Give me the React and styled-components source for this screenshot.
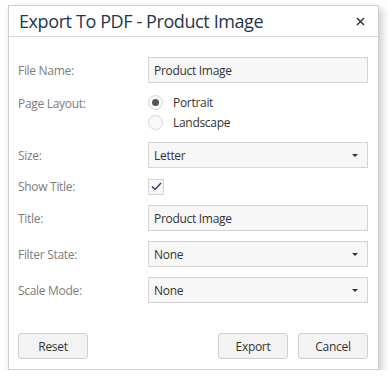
import styled, { createGlobalStyle } from "styled-components";

const Global = createGlobalStyle`
  body {
    margin: 0;
    background: #ffffff;
    font-family: "Open Sans", "Liberation Sans", sans-serif;
  }
`;

const Page = styled.div`
  padding: 5px 0 0 8px;
`;

const Dialog = styled.div`
  width: 369px;
  border: 1px solid #cfcfcf;
  background: #fff;
  box-shadow: 3px 4px 8px rgba(0, 0, 0, 0.22);
`;

const Header = styled.div`
  height: 30px;
  display: flex;
  align-items: center;
  justify-content: space-between;
  padding: 0 13px 0 10px;
  border-bottom: 1px solid #d6d6d6;
`;

const Title = styled.div`
  font-size: 18px;
  font-weight: 400;
  color: #22364d;
  letter-spacing: -0.4px;
`;

const Close = styled.button`
  border: 0;
  background: none;
  padding: 0;
  width: 10px;
  height: 10px;
  display: flex;
  align-items: center;
  justify-content: center;
  cursor: pointer;
`;

const Body = styled.div`
  padding: 20px 10px 10px 9px;
`;

const Row = styled.div`
  display: grid;
  grid-template-columns: 130px 1fr;
  align-items: center;
  margin-bottom: ${(p) => p.$gap ?? 10}px;
`;

const Label = styled.div`
  font-size: 12px;
  letter-spacing: -0.3px;
  color: #7d7d7d;
  align-self: ${(p) => (p.$top ? "start" : "center")};
  padding-top: ${(p) => (p.$top ? 2 : 0)}px;
`;

const Field = styled.div`
  height: 24px;
  border: 1px solid #d4d4d4;
  background: #f7f7f7;
  display: flex;
  align-items: center;
  justify-content: space-between;
  padding: 0 9px 0 5px;
  font-size: 12px;
  letter-spacing: -0.3px;
  color: #333;
`;

const Caret = styled.span`
  width: 0;
  height: 0;
  border-left: 3px solid transparent;
  border-right: 3px solid transparent;
  border-top: 3px solid #333;
`;

const RadioGroup = styled.div`
  display: flex;
  flex-direction: column;
`;

const RadioItem = styled.label`
  display: flex;
  align-items: center;
  height: 19.5px;
  font-size: 12px;
  letter-spacing: -0.3px;
  color: #333;
`;

const RadioCircle = styled.span`
  box-sizing: border-box;
  width: 15px;
  height: 15px;
  border-radius: 50%;
  border: 1px solid #d6d6d6;
  background: #f8f8f8;
  margin-right: 10px;
  display: flex;
  align-items: center;
  justify-content: center;
  &::after {
    content: "";
    width: 7px;
    height: 7px;
    border-radius: 50%;
    background: ${(p) => (p.$on ? "#555" : "transparent")};
  }
`;

const Check = styled.span`
  width: 14px;
  height: 14px;
  border: 1px solid #d4d4d4;
  background: #f7f7f7;
  display: flex;
  align-items: center;
  justify-content: center;
`;

const Footer = styled.div`
  display: flex;
  gap: 10px;
  margin-top: 30px;
`;

const Button = styled.button`
  width: 70px;
  height: 26px;
  border: 1px solid #d0d0d0;
  border-radius: 3px;
  background: #f3f3f3;
  font-family: inherit;
  font-size: 12px;
  letter-spacing: -0.3px;
  color: #333;
  padding: 0;
  margin-left: ${(p) => (p.$push ? "auto" : "0")};
`;

const Radio = ({ on, children }) => (
  <RadioItem>
    <RadioCircle $on={on} />
    {children}
  </RadioItem>
);

export default function App() {
  return (
    <>
      <Global />
      <Page>
        <Dialog>
          <Header>
            <Title>Export To PDF - Product Image</Title>
            <Close>
              <svg width="9" height="9" viewBox="0 0 9 9">
                <path d="M1 1L8 8M8 1L1 8" stroke="#333" strokeWidth="1.5" />
              </svg>
            </Close>
          </Header>
          <Body>
            <Row>
              <Label>File Name:</Label>
              <Field>Product Image</Field>
            </Row>
            <Row>
              <Label $top>Page Layout:</Label>
              <RadioGroup>
                <Radio on>Portrait</Radio>
                <Radio>Landscape</Radio>
              </RadioGroup>
            </Row>
            <Row>
              <Label>Size:</Label>
              <Field>
                Letter
                <Caret />
              </Field>
            </Row>
            <Row>
              <Label>Show Title:</Label>
              <Check>
                <svg width="11" height="9" viewBox="0 0 11 9">
                  <path d="M1 4.5L4 7.5L10 1" stroke="#2e3f5c" strokeWidth="1.4" fill="none" />
                </svg>
              </Check>
            </Row>
            <Row>
              <Label>Title:</Label>
              <Field>Product Image</Field>
            </Row>
            <Row>
              <Label>Filter State:</Label>
              <Field>
                None
                <Caret />
              </Field>
            </Row>
            <Row $gap={0}>
              <Label>Scale Mode:</Label>
              <Field>
                None
                <Caret />
              </Field>
            </Row>
            <Footer>
              <Button>Reset</Button>
              <Button $push>Export</Button>
              <Button>Cancel</Button>
            </Footer>
          </Body>
        </Dialog>
      </Page>
    </>
  );
}
